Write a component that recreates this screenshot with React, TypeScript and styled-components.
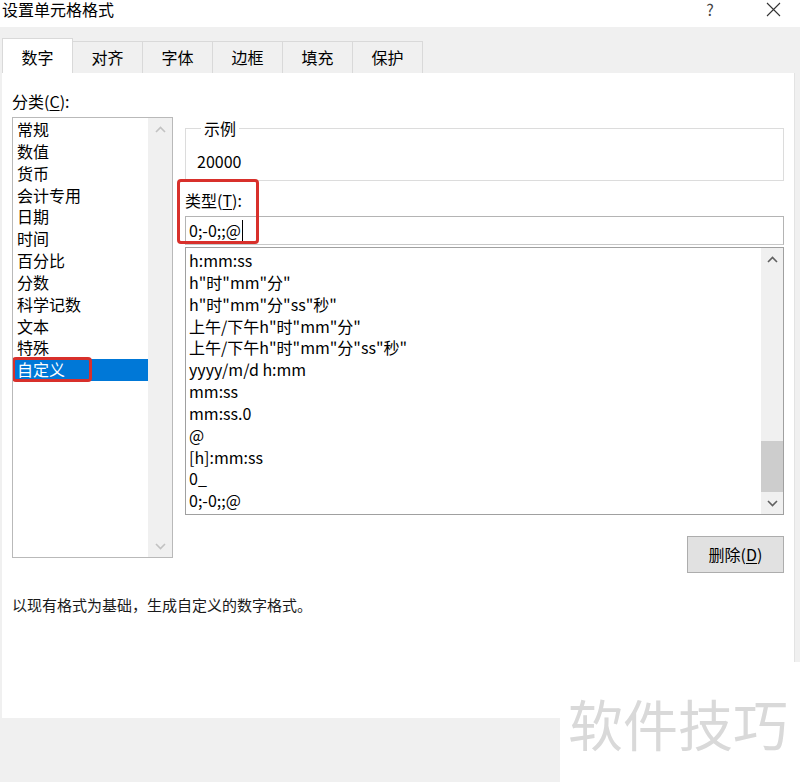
import React from "react";
import styled, { createGlobalStyle } from "styled-components";

const Global = createGlobalStyle`
  html, body { margin: 0; padding: 0; background: #f0f0f0; }
  body { font-family: "Noto Sans CJK SC", "Noto Sans", sans-serif; color: #000; }
  * { box-sizing: border-box; }
`;

const Window = styled.div`
  position: relative;
  width: 800px;
  height: 782px;
  background: #f0f0f0;
  overflow: hidden;
  display: flex;
  flex-direction: column;
`;

const TitleBar = styled.div`
  height: 27px;
  background: #fff;
  display: flex;
  align-items: flex-start;
  padding: 1px 7px 0 2px;
`;

const Title = styled.div`
  flex: 1;
  font-size: 16px;
  line-height: 17px;
  color: #000;
`;

const TitleButton = styled.div<{ $w: number; $ml?: number }>`
  width: ${(p) => p.$w}px;
  margin-left: ${(p) => p.$ml ?? 0}px;
  height: 17px;
  display: flex;
  align-items: center;
  justify-content: center;
  font-size: 16px;
  line-height: 17px;
  color: #444;
`;

const TabStrip = styled.div`
  margin-top: 11px;
  height: 35px;
  display: flex;
  align-items: flex-end;
  padding-left: 2px;
`;

const Tab = styled.div<{ $active?: boolean }>`
  width: 71px;
  height: ${(p) => (p.$active ? 35 : 32)}px;
  margin-left: -1px;
  &:first-child { margin-left: 0; }
  border: 1px solid #d9d9d9;
  border-bottom: none;
  background: ${(p) => (p.$active ? "#fff" : "#f0f0f0")};
  font-size: 16px;
  line-height: 20px;
  padding-top: ${(p) => (p.$active ? 8 : 5)}px;
  text-align: center;
  position: relative;
  z-index: ${(p) => (p.$active ? 1 : 0)};
`;

const Panel = styled.div`
  margin: 0 5px 0 2px;
  height: 645px;
  background: #fff;
  border-right: 1px solid #e3e3e3;
  padding: 18px 10px 0 10px;
  display: flex;
  flex-direction: column;
`;

const TopSection = styled.div`
  display: flex;
  gap: 12px;
  align-items: flex-start;
`;

const LeftColumn = styled.div`
  width: 161px;
  display: flex;
  flex-direction: column;
`;

const Label = styled.div`
  font-size: 16px;
  line-height: 20px;
  u { text-decoration: underline; text-underline-offset: 2px; }
`;

const ListBox = styled.div<{ $h: number; $border: string; $mt: number }>`
  height: ${(p) => p.$h}px;
  margin-top: ${(p) => p.$mt}px;
  border: 1px solid ${(p) => p.$border};
  display: flex;
  background: #fff;
`;

const ListItems = styled.div<{ $padTop: number }>`
  flex: 1;
  padding-top: ${(p) => p.$padTop}px;
  display: flex;
  flex-direction: column;
  overflow: hidden;
`;

const Item = styled.div<{ $selected?: boolean; $pad: number }>`
  position: relative;
  height: 21.85px;
  line-height: 21.85px;
  font-size: 16px;
  padding-left: ${(p) => p.$pad}px;
  white-space: nowrap;
  background: ${(p) => (p.$selected ? "#0078d7" : "transparent")};
  color: ${(p) => (p.$selected ? "#fff" : "#000")};
`;

const RedMark = styled.div<{ $l: number; $t: number; $w: number; $h: number }>`
  position: absolute;
  left: ${(p) => p.$l}px;
  top: ${(p) => p.$t}px;
  width: ${(p) => p.$w}px;
  height: ${(p) => p.$h}px;
  border: 3px solid #d8302b;
  border-radius: 4px;
  pointer-events: none;
`;

const ScrollBar = styled.div<{ $w: number }>`
  width: ${(p) => p.$w}px;
  background: #f0f0f0;
  display: flex;
  flex-direction: column;
`;

const ArrowBtn = styled.div`
  height: 22px;
  display: flex;
  align-items: center;
  justify-content: center;
`;

const Track = styled.div`
  flex: 1;
  display: flex;
  flex-direction: column;
  justify-content: flex-end;
`;

const Thumb = styled.div`
  height: 51px;
  background: #cdcdcd;
`;

const RightColumn = styled.div`
  flex: 1;
  display: flex;
  flex-direction: column;
`;

const GroupBox = styled.fieldset`
  margin: 27px 0 0 0;
  height: 63px;
  border: 1px solid #dcdcdc;
  padding: 0 0 0 11px;
  min-width: 0;
`;

const Legend = styled.legend`
  font-size: 16px;
  line-height: 20px;
  padding: 0 3px;
  margin-left: 4px;
`;

const Sample = styled.div`
  margin-top: 13px;
  font-size: 16px;
  line-height: 20px;
`;

const TypeField = styled.div`
  position: relative;
  margin-top: 9px;
  display: flex;
  flex-direction: column;
`;

const Input = styled.div`
  margin-top: 6px;
  height: 29px;
  border: 1px solid #b4b4b4;
  border-bottom-color: #c8c8c8;
  padding-left: 3px;
  font-size: 16px;
  line-height: 27px;
  display: flex;
  align-items: center;
`;

const Caret = styled.span`
  display: inline-block;
  width: 1px;
  height: 21px;
  background: #000;
  margin-left: 1px;
`;

const ButtonRow = styled.div`
  margin-top: 21px;
  display: flex;
  justify-content: flex-end;
`;

const Button = styled.div`
  width: 97px;
  height: 37px;
  background: #e1e1e1;
  border: 1px solid #adadad;
  font-size: 16px;
  line-height: 35px;
  text-align: center;
  u { text-decoration: underline; text-underline-offset: 2px; }
`;

const Description = styled.div`
  margin-top: 22px;
  font-size: 15px;
  line-height: 20px;
  color: #1a1a1a;
`;

const Watermark = styled.div`
  position: absolute;
  right: 0;
  bottom: 0;
  width: 240px;
  height: 120px;
  background: #fff;
  padding-left: 8px;
  display: flex;
  align-items: center;
  font-size: 55px;
  color: #d9d9d9;
  line-height: 60px;
  white-space: nowrap;
`;

const Chevron = ({ dir, color }: { dir: "up" | "down"; color: string }) => (
  <svg width="11" height="7" viewBox="0 0 11 7">
    <polyline
      points={dir === "up" ? "1,6 5.5,1.5 10,6" : "1,1 5.5,5.5 10,1"}
      fill="none"
      stroke={color}
      strokeWidth="1.6"
    />
  </svg>
);

const CloseIcon = () => (
  <svg width="15" height="15" viewBox="0 0 15 15">
    <path d="M1 1 L14 14 M14 1 L1 14" stroke="#333" strokeWidth="1.1" fill="none" />
  </svg>
);

const categories = [
  "常规",
  "数值",
  "货币",
  "会计专用",
  "日期",
  "时间",
  "百分比",
  "分数",
  "科学记数",
  "文本",
  "特殊",
  "自定义",
];

const formats = [
  "h:mm:ss",
  'h"时"mm"分"',
  'h"时"mm"分"ss"秒"',
  '上午/下午h"时"mm"分"',
  '上午/下午h"时"mm"分"ss"秒"',
  "yyyy/m/d h:mm",
  "mm:ss",
  "mm:ss.0",
  "@",
  "[h]:mm:ss",
  "0_",
  "0;-0;;@",
];

const tabs = ["数字", "对齐", "字体", "边框", "填充", "保护"];

export default function App() {
  return (
    <>
      <Global />
      <Window>
        <TitleBar>
          <Title>设置单元格格式</Title>
          <TitleButton $w={30}>?</TitleButton>
          <TitleButton $w={40} $ml={28}>
            <CloseIcon />
          </TitleButton>
        </TitleBar>
        <TabStrip>
          {tabs.map((t, i) => (
            <Tab key={t} $active={i === 0}>
              {t}
            </Tab>
          ))}
        </TabStrip>
        <Panel>
          <TopSection>
            <LeftColumn>
              <Label>
                分类(<u>C</u>):
              </Label>
              <ListBox $h={441} $border="#b9b9b9" $mt={6}>
                <ListItems $padTop={1}>
                  {categories.map((c, i) => (
                    <Item key={c} $pad={4} $selected={i === categories.length - 1}>
                      {c}
                      {i === categories.length - 1 && (
                        <RedMark $l={-1} $t={-2} $w={80} $h={25} />
                      )}
                    </Item>
                  ))}
                </ListItems>
                <ScrollBar $w={24}>
                  <ArrowBtn>
                    <Chevron dir="up" color="#c2c2c2" />
                  </ArrowBtn>
                  <Track />
                  <ArrowBtn>
                    <Chevron dir="down" color="#c2c2c2" />
                  </ArrowBtn>
                </ScrollBar>
              </ListBox>
            </LeftColumn>
            <RightColumn>
              <GroupBox>
                <Legend>示例</Legend>
                <Sample>20000</Sample>
              </GroupBox>
              <TypeField>
                <Label>
                  类型(<u>T</u>):
                </Label>
                <Input>
                  0;-0;;@
                  <Caret />
                </Input>
                <RedMark $l={-8} $t={-11} $w={82} $h={65} />
              </TypeField>
              <ListBox $h={268} $border="#a0a0a0" $mt={2}>
                <ListItems $padTop={2}>
                  {formats.map((f) => (
                    <Item key={f} $pad={3}>
                      {f}
                    </Item>
                  ))}
                </ListItems>
                <ScrollBar $w={22}>
                  <ArrowBtn>
                    <Chevron dir="up" color="#606060" />
                  </ArrowBtn>
                  <Track>
                    <Thumb />
                  </Track>
                  <ArrowBtn>
                    <Chevron dir="down" color="#606060" />
                  </ArrowBtn>
                </ScrollBar>
              </ListBox>
              <ButtonRow>
                <Button>
                  删除(<u>D</u>)
                </Button>
              </ButtonRow>
            </RightColumn>
          </TopSection>
          <Description>以现有格式为基础，生成自定义的数字格式。</Description>
        </Panel>
        <Watermark>软件技巧</Watermark>
      </Window>
    </>
  );
}
